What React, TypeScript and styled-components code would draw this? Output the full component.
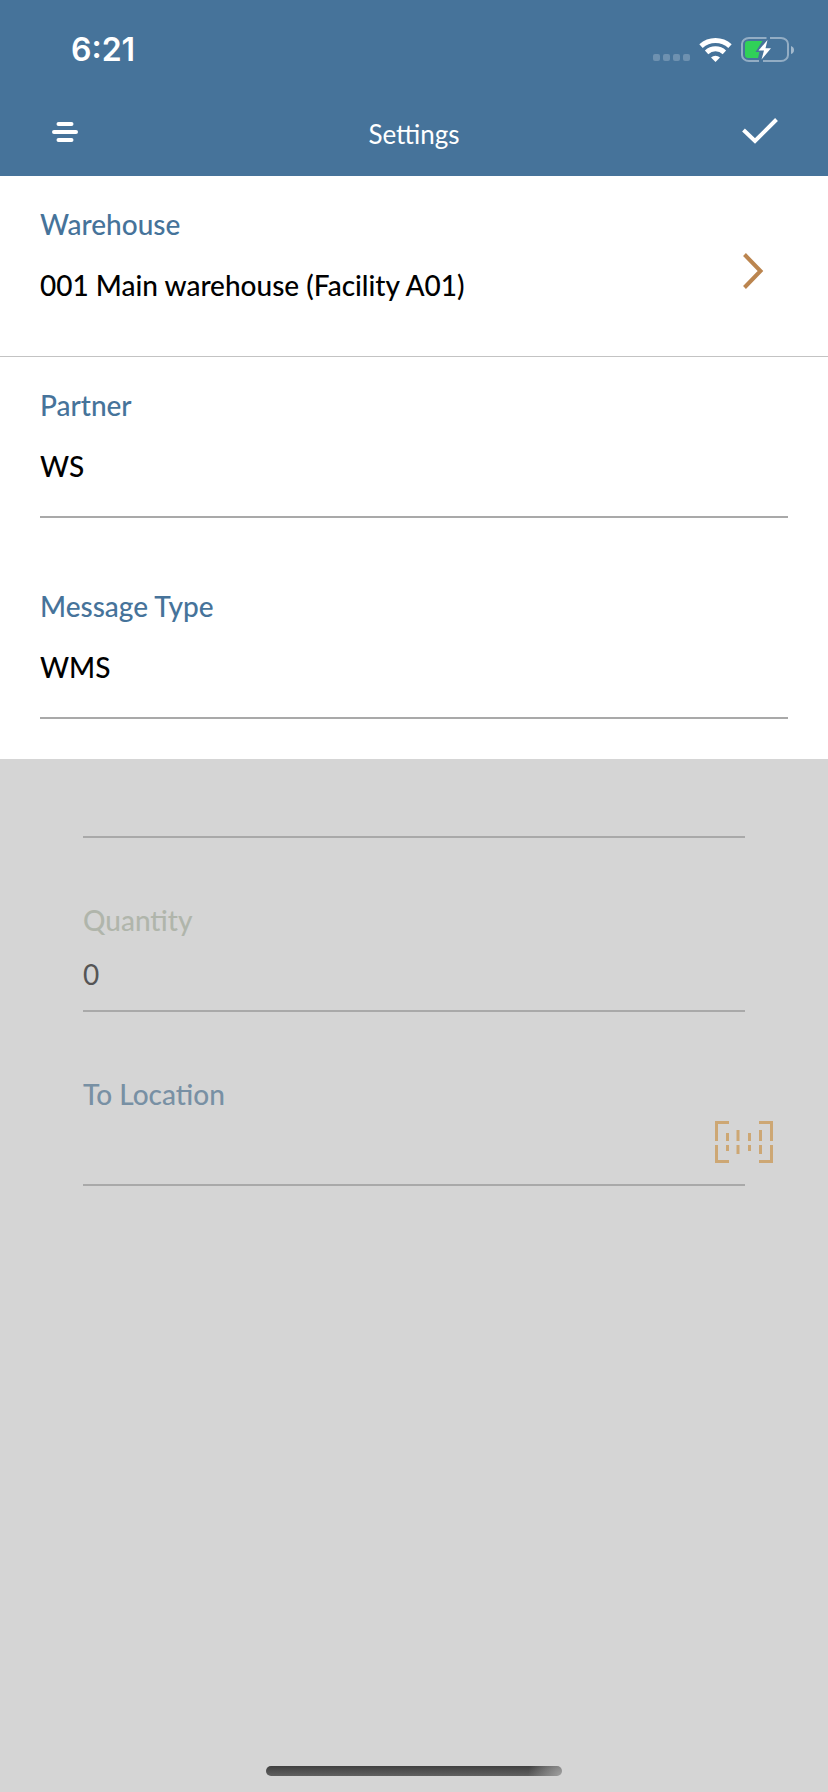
import React, { useId, useState } from "react";
import styled, { createGlobalStyle } from "styled-components";

const GlobalStyle = createGlobalStyle`
  *, *::before, *::after { box-sizing: border-box; }
  body { margin: 0; background: #d5d5d5; font-family: Lato, "Liberation Sans", sans-serif; }
`;

const Screen = styled.div`
  display: flex;
  flex-direction: column;
  min-height: 100vh;
`;

const Header = styled.header`
  background: #46739a;
  color: #fff;
`;

const StatusBar = styled.div`
  display: flex;
  align-items: center;
  justify-content: space-between;
  height: 88px;
  padding: 12px 34px 0 71px;
`;

const Time = styled.time`
  font: 600 32px/40px Inter, "Liberation Sans", sans-serif;
`;

const StatusIcons = styled.div`
  display: flex;
  align-items: center;
`;

const TitleBar = styled.div`
  display: grid;
  grid-template-columns: 1fr auto 1fr;
  align-items: center;
  height: 88px;
  padding: 0 50px;
`;

const Title = styled.h1`
  margin: 0;
  padding-top: 4px;
  font-size: 26px;
  line-height: 36px;
  font-weight: 400;
`;

const IconButton = styled.button<{ $end?: boolean }>`
  display: flex;
  justify-self: ${({ $end }) => ($end ? "end" : "start")};
  padding: 0;
  border: 0;
  background: none;
  color: inherit;
  cursor: pointer;
`;

const Panel = styled.main`
  background: #fff;
`;

const WarehouseRow = styled.button`
  display: flex;
  align-items: center;
  justify-content: space-between;
  width: 100%;
  padding: 30px 64px 20px 40px;
  border: 0;
  border-bottom: 1px solid #c3c3c3;
  background: none;
  font: inherit;
  text-align: left;
  cursor: pointer;
`;

const RowText = styled.span`
  display: flex;
  flex-direction: column;
  gap: 25px;
  padding-bottom: 33px;
  font-size: 28px;
  line-height: 36px;
  font-weight: 500;
`;

const RowLabel = styled.span`
  color: #46739a;
`;

const RowValue = styled.span`
  color: #000;
`;

const PanelFields = styled.div`
  display: flex;
  flex-direction: column;
  gap: 40px;
  padding: 0 40px 40px;
`;

const FieldBox = styled.div<{ $dim?: boolean }>`
  position: relative;
  display: flex;
  flex-direction: column;
  gap: ${({ $dim }) => ($dim ? 18 : 25)}px;
  padding: ${({ $dim }) => ($dim ? "64px 0 18px" : "30px 0 32px")};
  border-bottom: 2px solid #a9a9a9;
`;

const Label = styled.label<{ $color: string }>`
  font-size: 28px;
  line-height: 36px;
  font-weight: 500;
  color: ${({ $color }) => $color};
`;

const Input = styled.input<{ $dim?: boolean }>`
  width: 100%;
  height: 36px;
  padding: 0;
  border: 0;
  outline: 0;
  background: none;
  font: inherit;
  font-size: 28px;
  line-height: 36px;
  font-weight: ${({ $dim }) => ($dim ? 400 : 500)};
  color: ${({ $dim }) => ($dim ? "#555" : "#000")};
`;

const DimmedForm = styled.section`
  padding: 0 83px;
`;

const HiddenTopField = styled(FieldBox)`
  padding-top: 23px;
`;

const ScanButton = styled(IconButton)`
  position: absolute;
  right: -28px;
  bottom: 21px;
  color: #cda774;
`;

const HomeIndicator = styled.div`
  width: 296px;
  height: 10px;
  margin: auto auto 16px;
  border-radius: 5px;
  background:
    radial-gradient(circle at 100% 100%, #a0a0a0 0, transparent 34px),
    linear-gradient(#404040, #606060);
`;

function SignalDots() {
  return (
    <svg width="37" height="24" viewBox="0 0 37 24" fill="#fff" fillOpacity="0.22" aria-hidden="true">
      {[0, 10, 20, 30].map((x) => (
        <rect key={x} x={x} y="16" width="7" height="7" rx="2" />
      ))}
    </svg>
  );
}

function WifiIcon() {
  return (
    <svg width="51" height="26" viewBox="0 0 51 26" aria-hidden="true">
      <g fill="none" stroke="#fff" strokeWidth="5">
        <path d="M11 9.2A21.5 21.5 0 0 1 40 9.2" />
        <path d="M16.6 15.3A13.2 13.2 0 0 1 34.4 15.3" />
      </g>
      <path d="M25.5 25l-4.5-4.6a6.8 6.8 0 0 1 9 0z" fill="#fff" />
    </svg>
  );
}

function BatteryIcon() {
  return (
    <svg width="53" height="26" viewBox="0 0 53 26" aria-hidden="true">
      <g fill="none" stroke="#fff" strokeOpacity="0.42" strokeWidth="2">
        <path d="M25.5 1H8A7 6 0 0 0 1 7V18A7 6 0 0 0 8 24H18" />
        <path d="M29 1H40A7 6 0 0 1 47 7V18A7 6 0 0 1 40 24H22" />
      </g>
      <path d="M50 9q3 1 3 4t-3 4z" fill="#fff" fillOpacity="0.5" />
      <path d="M7 4H21.5L14.5 15H18.5L17 21H7a3 3 0 0 1-3-3V7a3 3 0 0 1 3-3z" fill="#30d158" />
      <path d="M26.5 3L17.5 13.5H23L20.5 22.5L30 11.3H24.5z" fill="#fff" />
    </svg>
  );
}

function MenuIcon() {
  return (
    <svg width="30" height="24" viewBox="0 0 30 24" stroke="#fff" strokeWidth="4" strokeLinecap="round" aria-hidden="true">
      <path d="M8.500 4H21.500M4 12H26M8.500 20H21.500" />
    </svg>
  );
}

function CheckIcon() {
  return (
    <svg width="37" height="30" viewBox="0 0 37 30" fill="none" stroke="#fff" strokeWidth="4" aria-hidden="true">
      <path d="M2.500 13L14 24L35.500 2.500" />
    </svg>
  );
}

function ChevronIcon() {
  return (
    <svg width="22" height="38" viewBox="0 0 22 38" fill="none" stroke="#bb854f" strokeWidth="4" aria-hidden="true">
      <path d="M2.500 2.500L18.500 19L2.500 35.500" />
    </svg>
  );
}

function BarcodeIcon() {
  return (
    <svg width="58" height="42" viewBox="0 0 58 42" fill="none" stroke="currentColor" strokeWidth="3" aria-hidden="true">
      <path d="M14 1.500H1.500V20M1.500 24V40.500H14M44 1.500H56.500V20M56.500 24V40.500H44" />
      <path d="M12.500 12V20M12.500 24V30M23 9V20M23 24V33M34.500 12V20M34.500 24V30M45.500 9V20M45.500 24V33" />
    </svg>
  );
}

interface FieldProps {
  label: string;
  initial: string;
  color?: string;
  dim?: boolean;
  children?: React.ReactNode;
}

function Field({ label, initial, color = "#46739a", dim, children }: FieldProps) {
  const id = useId();
  const [value, setValue] = useState(initial);
  return (
    <FieldBox $dim={dim}>
      <Label htmlFor={id} $color={color}>{label}</Label>
      <Input id={id} $dim={dim} value={value} onChange={(e) => setValue(e.target.value)} />
      {children}
    </FieldBox>
  );
}

export default function App() {
  return (
    <Screen>
      <GlobalStyle />
      <Header>
        <StatusBar>
          <Time>6:21</Time>
          <StatusIcons>
            <SignalDots />
            <WifiIcon />
            <BatteryIcon />
          </StatusIcons>
        </StatusBar>
        <TitleBar>
          <IconButton aria-label="Menu"><MenuIcon /></IconButton>
          <Title>Settings</Title>
          <IconButton $end aria-label="Save"><CheckIcon /></IconButton>
        </TitleBar>
      </Header>
      <Panel>
        <WarehouseRow>
          <RowText>
            <RowLabel>Warehouse</RowLabel>
            <RowValue>001 Main warehouse (Facility A01)</RowValue>
          </RowText>
          <ChevronIcon />
        </WarehouseRow>
        <PanelFields>
          <Field label="Partner" initial="WS" />
          <Field label="Message Type" initial="WMS" />
        </PanelFields>
      </Panel>
      <DimmedForm>
        <HiddenTopField $dim>
          <Input $dim aria-label="Item" />
        </HiddenTopField>
        <Field label="Quantity" initial="0" color="#b0b5ab" dim />
        <Field label="To Location" initial="" color="#7890a4" dim>
          <ScanButton aria-label="Scan barcode"><BarcodeIcon /></ScanButton>
        </Field>
      </DimmedForm>
      <HomeIndicator />
    </Screen>
  );
}
